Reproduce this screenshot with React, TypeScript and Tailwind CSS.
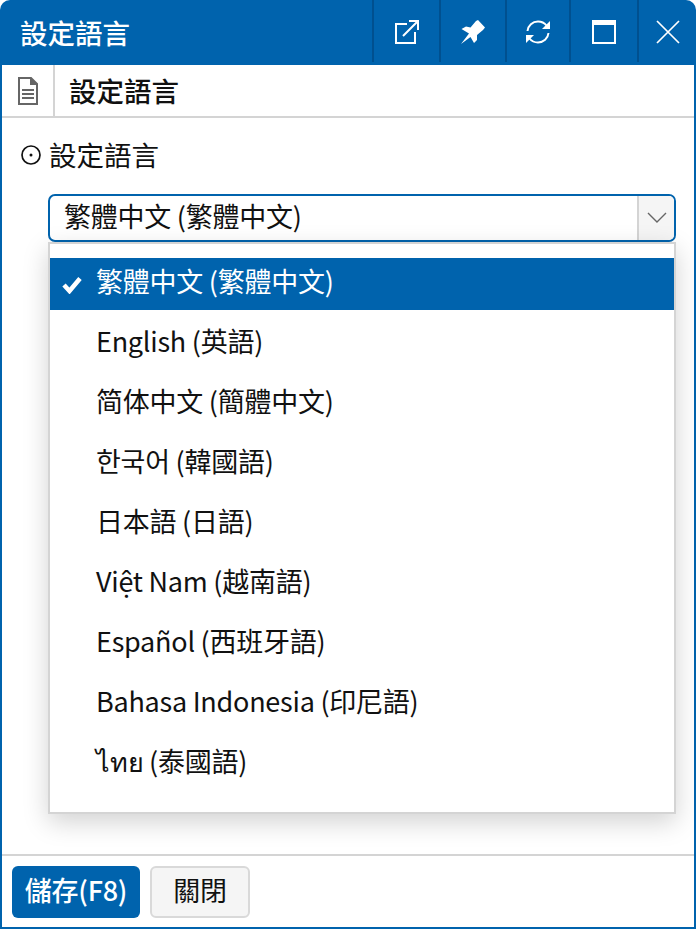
const cjk = "font-['Noto_Sans_CJK_TC','Noto_Sans',sans-serif]";

const languages = [
  "繁體中文 (繁體中文)",
  "English (英語)",
  "简体中文 (簡體中文)",
  "한국어 (韓國語)",
  "日本語 (日語)",
  "Việt Nam (越南語)",
  "Español (西班牙語)",
  "Bahasa Indonesia (印尼語)",
  "ไทย (泰國語)",
];

function TitleButton({ className, children }: { className: string; children: React.ReactNode }) {
  return (
    <div className={`flex h-[62px] items-center justify-center border-l-2 border-[#00508f] pt-[2px] ${className}`}>
      {children}
    </div>
  );
}

export default function App() {
  return (
    <div className={`${cjk} flex h-[929px] w-[696px] flex-col overflow-hidden rounded-t-[10px] bg-[#0063ad] text-[27px] tracking-[-0.25px] text-[#111]`}>
      {/* Title bar */}
      <header className="flex h-[65px] flex-shrink-0 items-start text-white">
        <div className="flex h-[65px] flex-1 items-center pl-[20px] text-[27.5px] font-medium tracking-normal">設定語言</div>
        <TitleButton className="w-[67px]">
          <svg width="24" height="24" viewBox="0 0 24 24" fill="none" stroke="white" strokeWidth="2">
            <path d="M12 4H1v19h19V12" />
            <path d="M8 16 23 1M14 1h9v9" />
          </svg>
        </TitleButton>
        <TitleButton className="w-[66px]">
          <svg width="24" height="24" viewBox="0 0 24 24" fill="white">
            <path d="M0 24 8 13.500 .5 9 5 6.500 9.500 7.500 15 1 17 0 24 7.500 22 10 16 15 16 20 13 23 9.500 17z" />
          </svg>
        </TitleButton>
        <TitleButton className="w-[64px]">
          <svg width="24" height="24" viewBox="0 0 24 24" fill="none" stroke="white" strokeWidth="2">
            <path d="M1.500 11C2 5.500 6.500 1.500 12 1.500c3.500 0 6.500 1.500 8.500 4" />
            <path d="M22.500 13c-.5 5.500-5 9.500-10.500 9.500-3.500 0-6.500-1.500-8.500-4" />
            <path d="M24 1v8h-8z" fill="white" stroke="none" />
            <path d="M0 23v-8h8z" fill="white" stroke="none" />
          </svg>
        </TitleButton>
        <TitleButton className="w-[68px]">
          <span className="block h-[24px] w-[24px] border-2 border-t-[5px] border-white" />
        </TitleButton>
        <TitleButton className="w-[59px]">
          <svg width="24" height="24" viewBox="0 0 24 24" fill="none" stroke="white" strokeWidth="1.700">
            <path d="M1 1l22 22M23 1 1 23" />
          </svg>
        </TitleButton>
      </header>

      {/* Window body */}
      <div className="relative mx-[2px] mb-[2px] flex min-h-0 flex-1 flex-col bg-white">
        <div className="flex h-[53px] flex-shrink-0 items-stretch border-b-2 border-[#d4d4d4]">
          <div className="flex w-[53px] items-center justify-center border-r-2 border-[#d4d4d4]">
            <svg width="20" height="28" viewBox="0 0 20 28" fill="none" stroke="#666" strokeWidth="2">
              <path d="M1 1h12l6 6v20H1z" />
              <path d="M13 1v6h6" fill="#666" />
              <path d="M4 13h12M4 17h12M4 21h12" />
            </svg>
          </div>
          <div className="flex items-center pl-[14px] text-[27.5px] font-medium tracking-normal">設定語言</div>
        </div>

        <div className="flex-1 px-[18px] pt-[18px]">
          <div className="flex h-[38px] items-center gap-[7px]">
            <svg width="22" height="22" viewBox="0 0 22 22" fill="none" stroke="#111" strokeWidth="1.700">
              <circle cx="11" cy="11" r="9" />
              <circle cx="11" cy="11" r="1.500" fill="#111" stroke="none" />
            </svg>
            <span className="text-[27.5px] tracking-normal">設定語言</span>
          </div>
          <div className="ml-[28px] mt-[20px] flex h-[48px] w-[628px] items-stretch overflow-hidden rounded-[7px] border-2 border-[#0063ad]">
            <div className="flex flex-1 items-center pb-[4px] pl-[14px]">繁體中文 (繁體中文)</div>
            <div className="flex w-[37px] items-center justify-center border-l-2 border-[#d4d4d4] bg-[#f5f5f5]">
              <svg width="20" height="12" viewBox="0 0 20 12" fill="none" stroke="#666" strokeWidth="1.400">
                <path d="M1 1l9 9 9-9" />
              </svg>
            </div>
          </div>
        </div>

        <footer className="flex h-[73px] flex-shrink-0 items-start gap-[10px] border-t-2 border-[#d4d4d4] pl-[10px] pt-[10px]">
          <button className="h-[52px] w-[128px] rounded-[6px] bg-[#0063ad] pb-[4px] font-medium text-white">儲存(F8)</button>
          <button className="h-[52px] w-[100px] rounded-[6px] border-2 border-[#d9d9d9] bg-[#f5f5f5] pb-[4px]">關閉</button>
        </footer>

        {/* Open select menu */}
        <div className="absolute left-[46px] top-[177px] flex h-[572px] w-[628px] flex-col gap-[8px] border-2 border-[#d4d4d4] bg-white pt-[14px] shadow-[0_8px_24px_rgba(0,0,0,0.18)]">
          {languages.map((lang, i) => (
            <div
              key={lang}
              className={`relative flex h-[52px] flex-shrink-0 items-center pb-[6px] pl-[46px] ${i === 0 ? "bg-[#0063ad] text-white" : ""}`}
            >
              {i === 0 && (
                <svg width="20" height="18" viewBox="0 0 20 18" fill="none" stroke="white" strokeWidth="4.500" className="absolute left-[12px] top-[18px]">
                  <path d="M2 9l5.500 6L18 2.500" />
                </svg>
              )}
              {lang}
            </div>
          ))}
        </div>
      </div>
    </div>
  );
}
